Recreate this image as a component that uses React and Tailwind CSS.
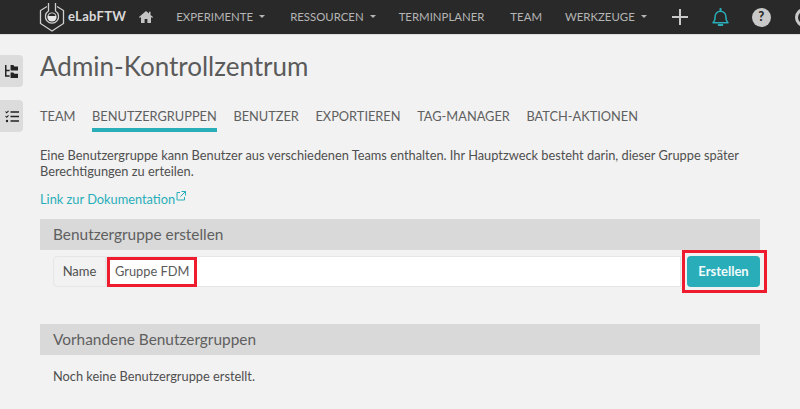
function Caret() {
  return <span className="ml-[6px] inline-block border-x-[3.5px] border-t-[3.5px] border-x-transparent border-t-[#b5b5b5] align-middle" />;
}

function Logo() {
  return (
    <svg width="26" height="30" viewBox="0 0 26 30" fill="none" className="shrink-0">
      <path d="M8 4.5 1.5 8.5v13L13 29l11.5-7.5v-13L18 4.5" stroke="#cfcfcf" strokeWidth="1.3" />
      <path d="M9.5 1v8a6.6 6.6 0 1 0 7 0V1" stroke="#cfcfcf" strokeWidth="1.3" />
      <circle cx="13" cy="15" r="4.6" fill="#e8e8e8" />
      <path d="M9.5 14a3.6 3.6 0 0 1 7 0z" fill="#292929" />
    </svg>
  );
}

function NavItem({ label, caret, className }) {
  return (
    <a className={`flex items-center whitespace-nowrap text-[11.4px] text-[#b5b5b5] ${className}`}>
      {label}
      {caret && <Caret />}
    </a>
  );
}

function Tab({ label, active }) {
  return (
    <a className={`h-[29px] whitespace-nowrap pt-[2px] text-[12.8px] leading-[22px] text-[#5f5f5f] ${active ? 'border-b-[4px] border-[#29aeb9]' : ''}`}>
      {label}
    </a>
  );
}

export default function App() {
  return (
    <div className="h-[409px] w-[800px] overflow-hidden bg-[#f2f2f2] font-['Lato',sans-serif] text-[#5a5a5a]">
      <header className="flex h-[35px] items-center overflow-hidden border-b border-[#dcdcdc] bg-[#292929] pl-[39px]">
        <Logo />
        <span className="ml-[3px] text-[13px] font-bold tracking-[0.3px] text-[#d9d9d9]">eLabFTW</span>
        <svg width="14" height="12" viewBox="0 0 14 12" className="ml-[13px] shrink-0" fill="#c4c4c4">
          <path d="M7 0 0 6l.8 1L2 6v6h3.6V8h2.8v4H12V6l1.2 1 .8-1-2.5-2.1V.8H10v1.8z" />
        </svg>
        <NavItem label="EXPERIMENTE" caret className="ml-[23px]" />
        <NavItem label="RESSOURCEN" caret className="ml-[25px]" />
        <NavItem label="TERMINPLANER" className="ml-[23px]" />
        <NavItem label="TEAM" className="ml-[26px]" />
        <NavItem label="WERKZEUGE" caret className="ml-[23px]" />
        <svg width="16" height="16" viewBox="0 0 16 16" className="ml-[25px] shrink-0" stroke="#c9c9c9" strokeWidth="2">
          <path d="M8 0v16M0 8h16" />
        </svg>
        <svg width="17" height="19" viewBox="0 0 18 20" className="ml-[24px] shrink-0" fill="none" stroke="#29aeb9" strokeWidth="1.5">
          <path d="M1 15.5c2-1.5 2.3-3.5 2.3-6.5a5.7 5.700 0 0 1 11.4 0c0 3 .3 5 2.3 6.5z" strokeLinejoin="round" />
          <path d="M9 .5v2M7 18h4" strokeLinecap="round" strokeWidth="2" />
        </svg>
        <span className="ml-[23px] flex h-[19px] w-[19px] shrink-0 items-center justify-center rounded-full bg-[#c9c9c9] text-[13px] font-black text-[#292929]">?</span>
        <span className="ml-[24px] h-[19px] w-[19px] shrink-0 rounded-full border-[3px] border-[#c9c9c9]" />
      </header>

      <div className="flex">
        <aside className="flex w-[40px] shrink-0 flex-col gap-[13px] pt-[20px]">
          <button className="flex h-[32px] w-[23px] items-center justify-center rounded-r-[4px] bg-[#dcdcdc]">
            <svg width="15" height="13" viewBox="0 0 16 14" fill="#222">
              <path d="M1 0h1.6v5H6v1.6H2.6V11H6v1.6H1z" />
              <path d="M7 0h3l1 1.5h4V6H7zM7 8h3l1 1.5h4V14H7z" />
            </svg>
          </button>
          <button className="flex h-[32px] w-[23px] items-center justify-center rounded-r-[4px] bg-[#dcdcdc]">
            <svg width="14" height="13" viewBox="0 0 14 13" fill="none" stroke="#222" strokeWidth="1.5">
              <path d="M5.5 2H14M5.5 6.5H14M5.5 11H14" />
              <path d="M.5 1.5 1.7 2.8 3.5.8M.5 6 1.7 7.3 3.5 5.3" strokeWidth="1.1" />
              <circle cx="2" cy="11" r="1.2" fill="#222" stroke="none" />
            </svg>
          </button>
        </aside>

        <main className="w-[720px]">
          <h1 className="mt-[14px] text-[26px] leading-[34px] text-[#5a5a5a]">Admin-Kontrollzentrum</h1>

          <nav className="mt-[20px] flex h-[29px] gap-[16.6px]">
            <Tab label="TEAM" />
            <Tab label="BENUTZERGRUPPEN" active />
            <Tab label="BENUTZER" />
            <Tab label="EXPORTIEREN" />
            <Tab label="TAG-MANAGER" />
            <Tab label="BATCH-AKTIONEN" />
          </nav>

          <p className="mt-[15px] text-[12.8px] leading-[16px] text-[#4f4f4f]">
            Eine Benutzergruppe kann Benutzer aus verschiedenen Teams enthalten. Ihr Hauptzweck besteht darin, dieser Gruppe später Berechtigungen zu erteilen.
          </p>

          <a className="mt-[12px] flex h-[16px] items-start text-[12.8px] leading-[16px] text-[#29aeb9]">
            Link zur Dokumentation
            <svg width="10" height="10" viewBox="0 0 10 10" fill="none" stroke="#29aeb9" strokeWidth="1" className="ml-[1px]">
              <path d="M4 1.5H1V9h7.5V6M5.5.5h4v4M9.5.5l-5 5" />
            </svg>
          </a>

          <section className="mt-[12px]">
            <h2 className="flex h-[31px] items-center bg-[#d9d9d9] pl-[13px] text-[15.4px] text-[#5f5f5f]">Benutzergruppe erstellen</h2>
            <div className="mt-[6px] flex h-[31px] pl-[13px]">
              <span className="flex w-[53px] items-center justify-center rounded-l-[4px] border border-[#e6e6e6] bg-[#f2f2f2] text-[13px] text-[#4f4f4f]">Name</span>
              <div className="flex flex-1 items-center border border-[#e6e6e6] bg-white">
                <span className="relative ml-[8px] mt-[1px] text-[12.8px] text-[#5a5a5a]">
                  Gruppe FDM
                  <span className="absolute -inset-x-[8px] -inset-y-[5px] border-[3px] border-[#ee1c2e]" />
                </span>
              </div>
              <div className="relative flex w-[79px] shrink-0 justify-end">
                <button className="h-[31px] w-[73px] rounded-[4px] bg-[#29aeb9] pt-[1px] text-[13px] font-bold text-[#f2fbfc]">Erstellen</button>
                <span className="absolute -inset-y-[6px] left-[1px] -right-[7px] border-[3px] border-[#ee1c2e]" />
              </div>
            </div>
          </section>

          <section className="mt-[37px]">
            <h2 className="flex h-[31px] items-center bg-[#d9d9d9] pl-[13px] text-[15.4px] text-[#5f5f5f]">Vorhandene Benutzergruppen</h2>
            <p className="mt-[13px] pl-[13px] text-[12.8px] leading-[16px] text-[#4f4f4f]">Noch keine Benutzergruppe erstellt.</p>
          </section>
        </main>
      </div>
    </div>
  );
}
